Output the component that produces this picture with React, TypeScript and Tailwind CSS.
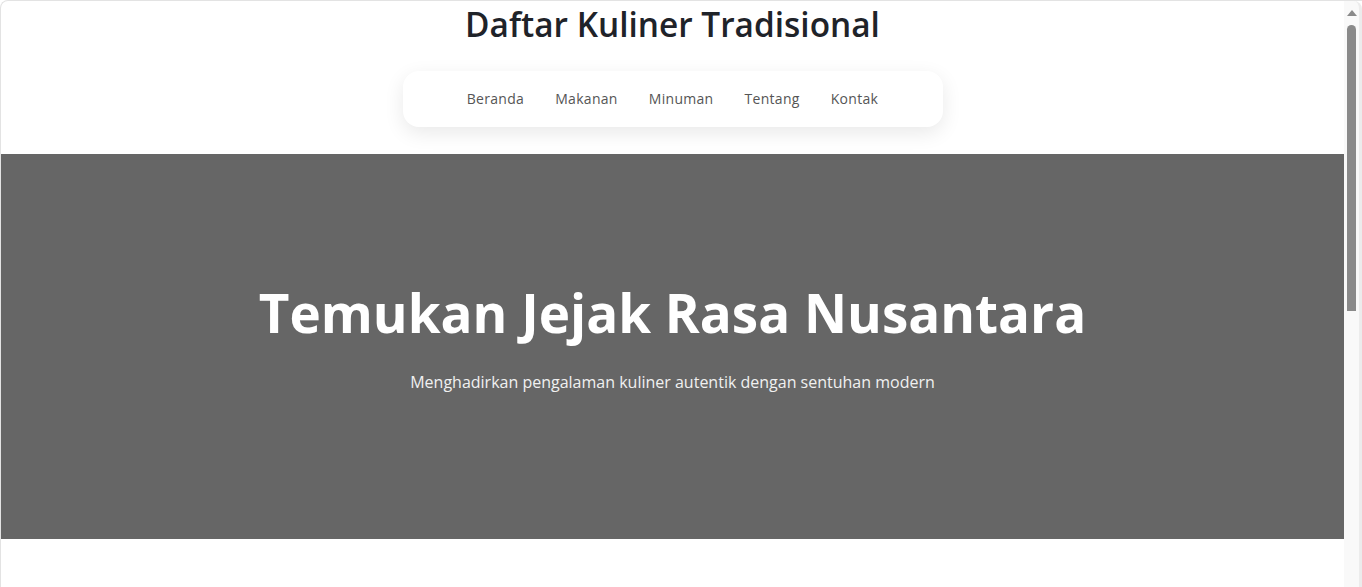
const links = ["Beranda", "Makanan", "Minuman", "Tentang", "Kontak"];

const Scrollbar = () => (
  <div className="w-[18px] shrink-0 bg-[#f9f9f9] border-r-[3px] border-[#ececec] rounded-tr-lg flex flex-col items-center pt-[9px]">
    <div className="w-0 h-0 border-l-[5px] border-r-[5px] border-b-[6px] border-l-transparent border-r-transparent border-b-[#8a8a8a]" />
    <div className="mt-[9px] w-[9px] h-[286px] rounded-t-full bg-[#8a8a8a]" />
  </div>
);

export default function App() {
  return (
    <div className="h-[587px] w-[1362px] overflow-hidden bg-white flex border-t border-l border-[#e3e3e3] rounded-tl-lg font-['Open_Sans',sans-serif]">
      <main className="flex-1 flex flex-col">
        <header className="flex flex-col items-center">
          <h1 className="text-[33.4px] leading-[44px] font-semibold text-[#1f2329] mt-px">
            Daftar Kuliner Tradisional
          </h1>
          <nav className="mt-[25px] w-[540px] h-[56px] pb-[2px] rounded-2xl bg-white shadow-[0_6px_20px_rgba(0,0,0,0.09)] flex items-center justify-center gap-[31px]">
            {links.map((l) => (
              <a key={l} className="text-[14px] text-[#555] tracking-[0.3px]">
                {l}
              </a>
            ))}
          </nav>
        </header>
        <section className="mt-[27px] h-[385px] bg-[#666666] flex flex-col items-center pt-[126px]">
          <h2 className="text-[53px] font-bold text-white leading-[66px]">
            Temukan Jejak Rasa Nusantara
          </h2>
          <p className="mt-[24px] text-[16px] leading-[24px] text-[#f0f0f0]">
            Menghadirkan pengalaman kuliner autentik dengan sentuhan modern
          </p>
        </section>
      </main>
      <Scrollbar />
    </div>
  );
}
